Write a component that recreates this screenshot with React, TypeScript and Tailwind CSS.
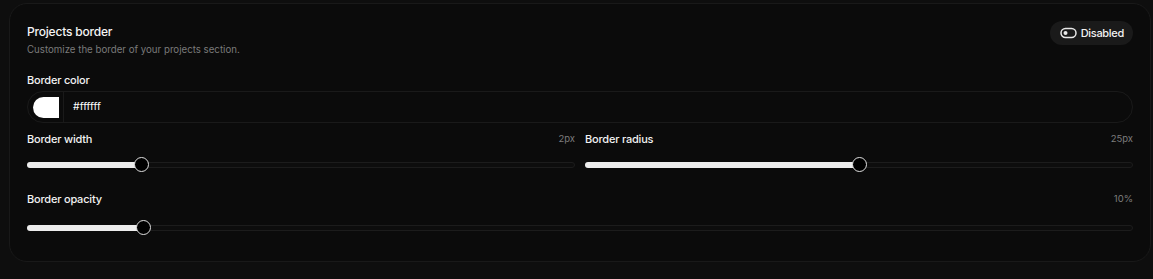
import React from "react";

function Slider({ pct }: { pct: number }) {
  const thumb = 15;
  return (
    <div className="relative h-[15px] flex items-center">
      <div className="relative w-full h-[6px] rounded-full border border-[#1c1c1c] bg-[#0d0d0d]">
        <div
          className="absolute left-[-1px] top-[-1px] bottom-[-1px] rounded-full bg-[#ededed]"
          style={{ width: `calc(${thumb / 2}px + ${pct} * (100% - ${thumb}px))` }}
        />
      </div>
      <div
        className="absolute top-0 w-[15px] h-[15px] rounded-full bg-black border-[1.5px] border-[#e0e0e0]"
        style={{ left: `calc(${pct} * (100% - ${thumb}px))` }}
      />
    </div>
  );
}

function SliderField({ label, value, pct, wide }: { label: string; value: string; pct: number; wide?: boolean }) {
  return (
    <div className="flex flex-col">
      <div className="flex justify-between items-center h-[14px]">
        <span className="text-[11px] font-medium text-[#f2f2f2] tracking-[-0.2px]">{label}</span>
        <span className="text-[9.5px] text-[#7d7d7d]">{value}</span>
      </div>
      <div className={wide ? "mt-[14px]" : "mt-[11px]"}>
        <Slider pct={pct} />
      </div>
    </div>
  );
}

export default function App() {
  return (
    <div
      className="w-[1153px] h-[279px] bg-[#0e0e0e] pt-[3px] pl-[9px] pr-[2px]"
      style={{ fontFamily: "Inter, 'Noto Sans', sans-serif" }}
    >
      <div className="h-[259px] rounded-[18px] border border-[#191919] bg-[#0b0b0b] px-[17px] pt-[17px]">
        <div className="flex justify-between items-start">
          <div className="flex flex-col pt-[3px]">
            <span className="text-[12px] font-medium leading-[16px] text-[#f5f5f5] tracking-[-0.2px]">Projects border</span>
            <span className="mt-[3px] text-[9.7px] leading-[14px] text-[#7a7a7a]">
              Customize the border of your projects section.
            </span>
          </div>
          <button className="flex items-center h-[24px] rounded-full bg-[#1a1a1a] pl-[10px] pr-[9px] gap-[4px]">
            <svg width="17" height="12" viewBox="0 0 17 12" fill="none">
              <rect x="1" y="1.5" width="15" height="9" rx="4.5" stroke="#e8e8e8" strokeWidth="1.5" />
              <circle cx="5.5" cy="6" r="2" fill="#e8e8e8" />
            </svg>
            <span className="text-[11px] font-medium text-[#f2f2f2] tracking-[-0.3px]">Disabled</span>
          </button>
        </div>

        <div className="mt-[16px] flex flex-col">
          <span className="text-[11px] font-medium leading-[14px] text-[#f2f2f2] tracking-[-0.2px]">Border color</span>
          <div className="mt-[4px] h-[32px] rounded-full border border-[#1a1a1a] flex items-center">
            <div className="ml-[5px] w-[26px] h-[21px] bg-white rounded-l-full" />
            <div className="ml-[4px] w-px self-stretch bg-[#1a1a1a]" />
            <span className="ml-[9px] text-[10.5px] text-white">#ffffff</span>
          </div>
        </div>

        <div className="mt-[9px] grid grid-cols-2 gap-[10px]">
          <SliderField label="Border width" value="2px" pct={0.2} />
          <SliderField label="Border radius" value="25px" pct={0.5} />
        </div>

        <div className="mt-[20px]">
          <SliderField label="Border opacity" value="10%" pct={0.1} wide />
        </div>
      </div>
    </div>
  );
}
